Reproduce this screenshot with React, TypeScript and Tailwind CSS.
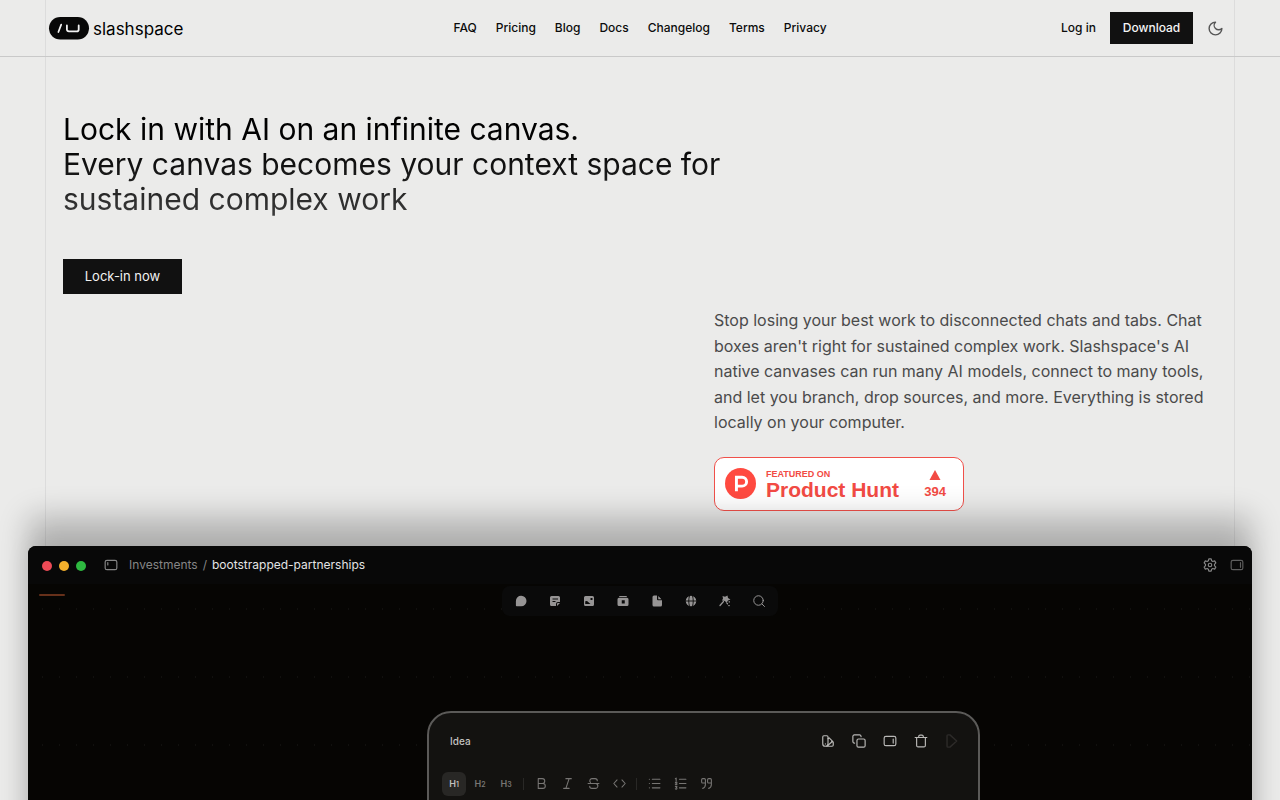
import type { ReactNode } from "react";

const navLinks = ["FAQ", "Pricing", "Blog", "Docs", "Changelog", "Terms", "Privacy"];

function Icon({ children, className = "size-3.5", stroke = 2 }: { children: ReactNode; className?: string; stroke?: number }) {
  return (
    <svg
      viewBox="0 0 24 24"
      fill="none"
      stroke="currentColor"
      strokeWidth={stroke}
      strokeLinecap="round"
      strokeLinejoin="round"
      aria-hidden="true"
      className={className}
    >
      {children}
    </svg>
  );
}

function Header() {
  return (
    <header className="relative border-b border-[#c9c9c9]">
      <div className="mx-auto grid h-14 grid-cols-[1fr_auto_1fr] items-center px-12">
        <a href="#home" className="flex items-center gap-[3px] text-black" aria-label="slashspace">
          <svg viewBox="0 0 42 24" className="h-6 w-[42px]" aria-hidden="true">
            <rect x="1" y="1" width="40" height="22.5" rx="11.25" fill="#080808" />
            <path d="M13.2 8.600 10.400 16" stroke="#f2f2f2" strokeWidth="1.7" strokeLinecap="round" />
            <path d="M18.900 9.400v4a1.900 1.900 0 0 0 1.900 1.900h8a1.900 1.900 0 0 0 1.900-1.900v-4" fill="none" stroke="#f2f2f2" strokeWidth="1.8" strokeLinecap="round" />
          </svg>
          <span className="pt-0.5 text-[17px] leading-6">slashspace</span>
        </a>
        <nav aria-label="Main" className="flex items-center gap-[19px] text-xs font-medium text-[#0c0c0c]">
          {navLinks.map((label) => (
            <a key={label} href={`#${label.toLowerCase()}`}>
              {label}
            </a>
          ))}
        </nav>
        <div className="flex items-center justify-end pr-2 text-xs font-medium">
          <a href="#login" className="text-[#0c0c0c]">Log in</a>
          <a href="#download" className="ml-3.5 flex h-8 w-[83px] items-center justify-center bg-[#111] text-[#f5f5f5]">
            Download
          </a>
          <button type="button" aria-label="Use dark theme" className="ml-3.5 text-[#555]">
            <Icon className="size-[17px]">
              <path d="M12 3a6 6 0 0 0 9 9 9 9 0 1 1-9-9Z" />
            </Icon>
          </button>
        </div>
      </div>
    </header>
  );
}

function ProductHuntBadge() {
  return (
    <a
      href="#product-hunt"
      className="mt-[21px] flex h-[54px] w-[250px] items-center rounded-[10px] border border-[#f0504a] bg-white pr-[17px] pl-2.5 font-['Liberation_Sans',sans-serif] font-bold text-[#f24b44]"
    >
      <svg viewBox="0 0 32 32" className="size-[31px]" aria-hidden="true">
        <circle cx="16" cy="16" r="16" fill="#ff4a40" />
        <path fill="none" stroke="#fff" strokeWidth="3" d="M11.800 24V9.500h5.900a4.600 4.600 0 0 1 0 9.200h-5.900" />
      </svg>
      <span className="ml-2.5 flex flex-col pt-0.5">
        <span className="text-[9px] leading-[10px]">FEATURED ON</span>
        <span className="text-[21px] leading-[22px]">Product Hunt</span>
      </span>
      <span className="ml-auto flex flex-col items-center pt-0.5">
        <svg viewBox="0 0 12 10" className="h-2.5 w-3" aria-hidden="true">
          <path d="M6 0 11.500 10H.500z" fill="currentColor" />
        </svg>
        <span className="mt-1 text-[13px] leading-4">394</span>
      </span>
    </a>
  );
}

function Hero() {
  return (
    <section className="relative flex flex-col px-[63px] pt-[55px]">
      <h1 className="bg-linear-to-b from-black to-[#3c3c3c] bg-clip-text text-3xl leading-[35px] text-transparent">
        Lock in with AI on an infinite canvas.
        <br />
        Every canvas becomes your context space for
        <br />
        sustained complex work
      </h1>
      <a href="#start" className="mt-[42px] flex h-[35px] w-[119px] items-center justify-center bg-[#111] text-[13px] text-[#f2f2f2]">
        Lock-in now
      </a>
      <div className="mt-3.5 w-[503px] self-end">
        <p className="text-base leading-[1.6] text-[#4a4a4a]">
          Stop losing your best work to disconnected chats and tabs. Chat
          boxes aren't right for sustained complex work. Slashspace's AI
          native canvases can run many AI models, connect to many tools,
          and let you branch, drop sources, and more. Everything is stored
          locally on your computer.
        </p>
        <ProductHuntBadge />
      </div>
    </section>
  );
}

const canvasTools: { label: string; art: ReactNode }[] = [
  { label: "Chat", art: <path fill="currentColor" d="M12.500 1.500a10 10 0 1 1 0 21H3.300a1.500 1.500 0 0 1-1.500-1.500v-9A10.300 10.300 0 0 1 12.500 1.500Z" /> },
  {
    label: "Note",
    art: <path fill="currentColor" fillRule="evenodd" d="M5 2h14a3 3 0 0 1 3 3v9h-4a4 4 0 0 0-4 4v4H5a3 3 0 0 1-3-3V5a3 3 0 0 1 3-3Zm2 5v2h11V7Zm0 5v2h6v-2Zm9 10v-4a2 2 0 0 1 2-2h4Z" />,
  },
  {
    label: "Image",
    art: <path fill="currentColor" fillRule="evenodd" d="M5 2h14a3 3 0 0 1 3 3v14a3 3 0 0 1-3 3H5a3 3 0 0 1-3-3V5a3 3 0 0 1 3-3Zm10 4v4h4V6ZM4.500 12.500V18H15l-7-6Z" />,
  },
  {
    label: "Video",
    art: <path fill="currentColor" fillRule="evenodd" d="M6 2h12a2 2 0 0 1 2 2H4a2 2 0 0 1 2-2ZM4 5.500h16a3 3 0 0 1 3 3V19a3 3 0 0 1-3 3H4a3 3 0 0 1-3-3V8.500a3 3 0 0 1 3-3Zm5.500 5v6.500h6v-6.500Z" />,
  },
  { label: "File", art: <path fill="currentColor" d="M6 1h6v7.500a2 2 0 0 0 2 2h8V20a3 3 0 0 1-3 3H6a3 3 0 0 1-3-3V4a3 3 0 0 1 3-3Zm8.500 1L21 8.500h-6.500Z" /> },
  {
    label: "Web",
    art: (
      <>
        <circle cx="12" cy="12" r="10.500" fill="currentColor" />
        <path d="M1 12h22M9 1.500c-2 7-2 14 0 21M15 1.500c2 7 2 14 0 21" fill="none" stroke="#0b0b0a" strokeWidth="1.8" />
      </>
    ),
  },
  {
    label: "Magic",
    art: (
      <>
        <path fill="currentColor" d="m7 2 5 1.500L17 1l1 5 5 3-5 2-3 5-3-4-6-1 2-4Z" />
        <path d="m9 13-7 8M16 16.500l1 1M20.500 13v1M19.500 21h1" fill="none" stroke="currentColor" strokeWidth="2.500" strokeLinecap="round" />
      </>
    ),
  },
  {
    label: "Search",
    art: (
      <g fill="none" stroke="currentColor" strokeWidth="2" strokeLinecap="round">
        <circle cx="11" cy="11" r="9.500" />
        <path d="m18 18 5 5" />
      </g>
    ),
  },
];

const cardActions: { label: string; art: ReactNode }[] = [
  {
    label: "Colour",
    art: (
      <>
        <path d="M3 5a2 2 0 0 1 2-2h5a2 2 0 0 1 2 2v11.500a4.500 4.500 0 0 1-9 0Z" />
        <path d="m12 8 2-1.500 6 6L10 21h9a2 2 0 0 0 2-2v-5l-3-1M7.500 17v.1" />
      </>
    ),
  },
  {
    label: "Duplicate",
    art: (
      <>
        <rect x="8.500" y="8.500" width="14" height="14" rx="2.500" />
        <path d="M4.500 15.500h-.500a2.500 2.500 0 0 1-2.500-2.500V4A2.500 2.500 0 0 1 4 1.500h9A2.500 2.500 0 0 1 15.500 4v.500" />
      </>
    ),
  },
  {
    label: "Open in panel",
    art: (
      <>
        <rect x="2" y="4" width="20" height="16" rx="3" />
        <path d="M17.500 8.500v7" />
      </>
    ),
  },
  {
    label: "Delete",
    art: <path d="M2 6h20M4.500 6v13.500A2.500 2.500 0 0 0 7 22h10a2.500 2.500 0 0 0 2.500-2.500V6M8 6V4.500A2.500 2.500 0 0 1 10.500 2h3A2.500 2.500 0 0 1 16 4.500V6" />,
  },
];

const formats: { label: string; art: ReactNode }[] = [
  { label: "Bold", art: <path d="M6 3h7.500a4.500 4.500 0 0 1 0 9H6Zm0 9h8.500a4.500 4.500 0 0 1 0 9H6Z" /> },
  { label: "Italic", art: <path d="M9 3h10M5 21h10M15 3 9 21" /> },
  { label: "Strikethrough", art: <path d="M19 7a4 4 0 0 0-4-4H9.500a4 4 0 0 0-3 7M2 12h20M16 12a4.500 4.500 0 0 1-1 9H9a4 4 0 0 1-4-4" /> },
  { label: "Code", art: <path d="m7.500 5.500-6 6.500 6 6.500M16.500 5.500l6 6.500-6 6.500" /> },
];

const lists: { label: string; art: ReactNode }[] = [
  { label: "Bulleted list", art: <path d="M8 4h14M8 12h14M8 20h14M2.500 4h.1M2.500 12h.1M2.500 20h.1" /> },
  { label: "Numbered list", art: <path d="M10 4h12M10 12h12M10 20h12M2.500 3 4 2v5M2.500 11a1.500 1.500 0 0 1 3 0c0 1-3 3-3 3h3M2.500 17.500h3l-1.500 2a1.500 1.500 0 1 1-1.500 2" /> },
  { label: "Quote", art: <path d="M10 11H5a2 2 0 0 1-2-2V5a2 2 0 0 1 2-2h3a2 2 0 0 1 2 2v9c0 4-2 6-5 7M21 11h-5a2 2 0 0 1-2-2V5a2 2 0 0 1 2-2h3a2 2 0 0 1 2 2v9c0 4-2 6-5 7" /> },
];

function FormatButton({ label, art }: { label: string; art: ReactNode }) {
  return (
    <button type="button" aria-label={label} className="flex size-6 items-center justify-center">
      <Icon className="size-[13px]">{art}</Icon>
    </button>
  );
}

function IdeaCard() {
  return (
    <article className="absolute top-[165px] left-[399px] h-[420px] w-[553px] rounded-3xl border-2 border-[#5b5a58] bg-[#131210]">
      <div className="flex items-center pt-[19px] pr-[19px] pl-[21px]">
        <h2 className="text-[10px] leading-4 font-medium text-[#c4c3c1]">Idea</h2>
        <div className="ml-auto flex items-center gap-[17px] text-[#b9b8b6]">
          {cardActions.map(({ label, art }) => (
            <button key={label} type="button" aria-label={label}>
              <Icon>{art}</Icon>
            </button>
          ))}
          <button type="button" aria-label="Send" className="text-[#2c2a28]">
            <Icon className="h-[18px] w-3.5" stroke={2.5}>
              <path d="M5 1.500A1.500 1.500 0 0 0 3.500 3v18A1.500 1.500 0 0 0 5 22.500h3.500L20 12 8.500 1.500Z" />
            </Icon>
          </button>
        </div>
      </div>
      <div className="mt-[22px] flex items-center gap-0.5 pl-[13px] text-[#777573]">
        {[1, 2, 3].map((level) => (
          <button
            key={level}
            type="button"
            aria-pressed={level === 1}
            className="flex size-6 items-center justify-center rounded-md text-[9px] font-semibold aria-pressed:bg-[#282725] aria-pressed:text-[#c0bfbd]"
          >
            H<span className="pt-0.5 text-[7px]">{level}</span>
          </button>
        ))}
        <span className="mx-[3px] h-3 w-px bg-[#292826]" />
        {formats.map((item) => (
          <FormatButton key={item.label} {...item} />
        ))}
        <span className="mx-[3px] h-3 w-px bg-[#292826]" />
        {lists.map((item) => (
          <FormatButton key={item.label} {...item} />
        ))}
      </div>
    </article>
  );
}

function AppWindow() {
  return (
    <section
      aria-label="Slashspace app"
      className="relative mx-7 mt-[35px] h-[720px] overflow-hidden rounded-lg bg-[#060503] bg-[radial-gradient(circle,#11100e_1px,transparent_1px)] bg-size-[17px_68px] bg-position-[6px_29px] shadow-[0_-30px_30px_rgba(0,0,0,0.23),0_0_24px_rgba(0,0,0,0.08)]"
    >
      <div className="flex h-[38px] items-center bg-[#080808] pr-2 pl-3.5 text-[#868686]">
        <div className="flex gap-[7px] pt-0.5">
          <span className="size-2.5 rounded-full bg-[#ec4a56]" />
          <span className="size-2.5 rounded-full bg-[#f3b02c]" />
          <span className="size-2.5 rounded-full bg-[#2eb940]" />
        </div>
        <button type="button" aria-label="Toggle sidebar" className="ml-[18px]">
          <Icon>
            <rect x="2" y="4" width="20" height="16" rx="3" />
            <path d="M6.500 8v4" />
          </Icon>
        </button>
        <p className="ml-[11px] flex gap-[5px] text-xs">
          <span>Investments</span>
          <span>/</span>
          <span className="text-[#e4e4e4]">bootstrapped-partnerships</span>
        </p>
        <div className="ml-auto flex gap-[13px]">
          <button type="button" aria-label="Settings">
            <Icon>
              <path d="M10 1.500h4l.800 3.200 2 1.200 3.200-.900 2 3.400-2.300 2.400v2.400l2.300 2.400-2 3.400-3.200-.900-2 1.200-.800 3.200h-4l-.800-3.200-2-1.200-3.200.900-2-3.400 2.300-2.400v-2.400L2 8.400 4 5l3.200.900 2-1.200Z" />
              <circle cx="12" cy="12" r="3" />
            </Icon>
          </button>
          <button type="button" aria-label="Toggle panel" className="text-[#5e5e5e]">
            <Icon>
              <rect x="2" y="4" width="20" height="16" rx="3" />
              <path d="M18 8v8" />
            </Icon>
          </button>
        </div>
      </div>
      <div className="px-[11px] pt-2.5">
        <div className="h-0.5 w-[26px] rounded bg-[#66301a]" />
      </div>
      <div className="absolute top-10 left-1/2 flex h-[30px] w-[276px] -translate-x-1/2 items-center justify-between rounded-lg bg-[#0a0a0a] px-[13px] text-[#969494]">
        {canvasTools.map(({ label, art }) => (
          <button key={label} type="button" aria-label={label}>
            <svg viewBox="0 0 24 24" className="size-3" aria-hidden="true">
              {art}
            </svg>
          </button>
        ))}
      </div>
      <IdeaCard />
    </section>
  );
}

export default function App() {
  return (
    <div className="relative h-screen overflow-hidden bg-[#ebebea] font-['Inter',sans-serif]">
      <div className="absolute inset-y-0 right-[45px] left-[45px] border-x border-[#dcdcdc]" />
      <Header />
      <main>
        <Hero />
        <AppWindow />
      </main>
    </div>
  );
}
